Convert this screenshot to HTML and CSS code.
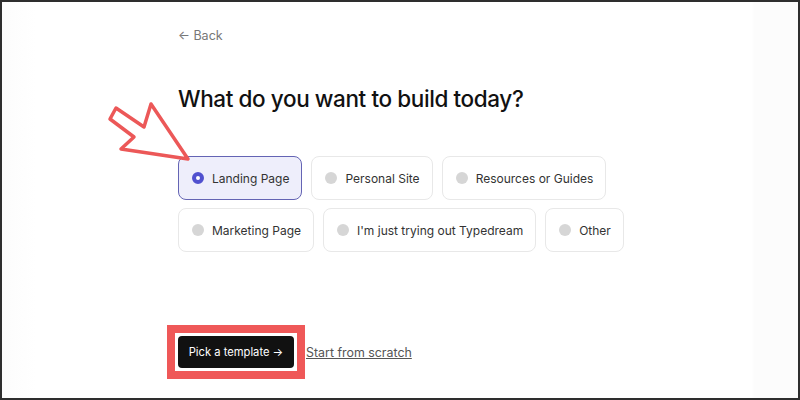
FILE: index.html
```html
<!DOCTYPE html>
<html lang="en">
<head>
<meta charset="utf-8">
<title>What do you want to build today?</title>
<link rel="stylesheet" href="styles.css">
</head>
<body>
<div class="frame">
  <div class="content">
    <a class="back" href="#">← Back</a>
    <h1 class="title">What do you want to build today?</h1>
    <div class="options">
      <div class="row">
        <label class="chip selected"><span class="dot"></span>Landing Page</label>
        <label class="chip"><span class="dot"></span>Personal Site</label>
        <label class="chip"><span class="dot"></span>Resources or Guides</label>
      </div>
      <div class="row">
        <label class="chip"><span class="dot"></span>Marketing Page</label>
        <label class="chip"><span class="dot"></span>I'm just trying out Typedream</label>
        <label class="chip"><span class="dot"></span>Other</label>
      </div>
    </div>
    <div class="actions">
      <span class="highlight"><button class="primary">Pick a template →</button></span>
      <a class="link" href="#">Start from scratch</a>
    </div>
  </div>
  <svg class="annot-arrow" width="100" height="80" viewBox="100 95 100 80">
    <polygon points="116,108 144,127 151,104 188,159 121,149 134,137 110,119" fill="#fff" stroke="#ec5858" stroke-width="3.5" stroke-linejoin="round"/>
  </svg>
</div>
</body>
</html>
```
FILE: styles.css
```css
* { box-sizing: border-box; }
html, body { margin: 0; padding: 0; }
body {
  font-family: Inter, "Noto Sans", sans-serif;
  background: #fff;
}
.frame {
  position: relative;
  width: 800px;
  height: 400px;
  border: 2px solid #2e2e2e;
  background: linear-gradient(to right, #fcfcfc 0, #fff 34px, #fff 750px, #fcfcfc 752px);
  overflow: hidden;
}
.content {
  padding: 26px 0 0 176px;
  display: flex;
  flex-direction: column;
  align-items: flex-start;
}
.back {
  font-size: 12.5px;
  line-height: 16px;
  color: #777;
  text-decoration: none;
}
.title {
  margin: 40px 0 0;
  font-size: 22.5px;
  line-height: 30px;
  font-weight: 500;
  color: #111;
  letter-spacing: -0.4px;
}
.options {
  margin-top: 42px;
  display: flex;
  flex-direction: column;
  gap: 8px;
}
.row {
  display: flex;
  gap: 9px;
}
.chip {
  height: 44px;
  display: flex;
  align-items: center;
  gap: 8px;
  padding: 0 12px 0 13px;
  border: 1px solid #e8e8e8;
  border-radius: 8px;
  font-size: 12px;
  color: #333;
  background: #fff;
}
.chip .dot {
  width: 12px;
  height: 12px;
  border-radius: 50%;
  background: #d6d6d6;
  flex: none;
}
.chip.selected {
  background: #eeeefb;
  border-color: #6464b4;
}
.chip.selected .dot {
  background: #fff;
  border: 4px solid #5151cf;
}
.actions {
  margin-top: 84px;
  display: flex;
  align-items: center;
  gap: 12px;
}
.highlight {
  position: relative;
  display: flex;
}
.highlight::after {
  content: "";
  position: absolute;
  inset: -11px;
  border: 8px solid #ef5858;
  pointer-events: none;
}
.primary {
  width: 116px;
  height: 32px;
  background: #111;
  color: #fff;
  border: 0;
  border-radius: 4px;
  font-family: inherit;
  font-size: 11.2px;
}
.link {
  font-size: 12.4px;
  color: #555;
  text-decoration: underline;
}
.annot-arrow {
  position: absolute;
  left: 98px;
  top: 93px;
}
```
